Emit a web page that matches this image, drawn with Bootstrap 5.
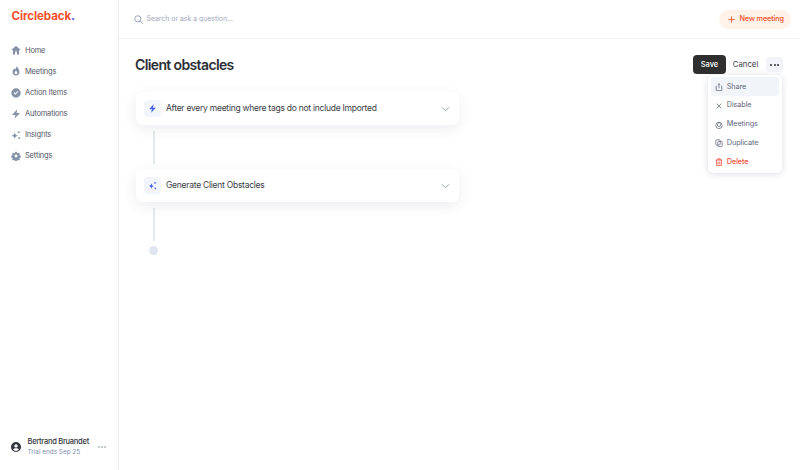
<!DOCTYPE html>
<html lang="en">
<head>
<meta charset="utf-8">
<title>Client obstacles</title>
<link href="https://cdn.jsdelivr.net/npm/bootstrap@5.3.0/dist/css/bootstrap.min.css" rel="stylesheet">
<style>
html,body{height:470px;overflow:hidden;background:#fff}
body{font-family:Inter,"Liberation Sans",sans-serif;color:#33363f;font-size:7.6px}
.shell{height:470px}
.side{width:119px;flex:none;border-right:1px solid #eef0f3;background:#fff;box-shadow:inset -10px 0 12px -12px rgba(40,50,80,.03)}
.brand{font-size:11.6px;font-weight:700;color:#f4502a;padding:8.500px 0 0 11.500px;height:39.800px;line-height:14px;letter-spacing:-.01em}
.brand i{font-style:normal;font-weight:800;color:#4a63ee}
.navi{display:flex;align-items:center;gap:4px;height:21.100px;padding-left:11px;color:#525766;font-size:7.500px;font-weight:400;letter-spacing:-.025em}
.navi svg{width:10px;height:10px;fill:#8593a9;flex:none}
.who{padding:0 0 13px 11px;gap:6.500px;white-space:nowrap}
.who b{font-size:7.500px;font-weight:500;color:#30333b;display:block;line-height:10px;letter-spacing:-.035em}
.who small{font-size:6.400px;color:#7d8fae;display:block;line-height:10px;font-weight:400}
.more{margin-left:3px}
.top{height:39px;border-bottom:1px solid #eef0f3;padding:0 9px 0 15px}
.q{color:#a0aabd;font-size:6.900px;margin-left:3.500px}
.newm{background:#fff2e9;color:#f4502a;border:0;border-radius:13px;height:19px;width:72px;padding:0 0 0 9px;font-size:7.300px;font-weight:500;display:flex;align-items:center;gap:4.500px;letter-spacing:-.02em}
.work{padding:0 17px}
.hd{height:51px}
.ttl{font-size:14px;font-weight:600;color:#2c2e35;margin:0;line-height:1;padding-top:.5px;letter-spacing:-.045em;margin-left:-1px}
.sv{background:#2f2f2f;color:#fff;border:0;border-radius:4px;width:33px;height:19px;font-size:7.500px;font-weight:500;padding:1px 0 0;margin-right:-1px}
.cn{background:none;border:0;color:#3d4048;font-size:7.800px;font-weight:400;padding:1px 0 0;width:41px;height:19px}
.dt{background:#f2f4f9;border:0;border-radius:4px;width:17px;height:15px;padding:0;display:flex;align-items:center;justify-content:center;gap:1.300px}
.dt span{width:2px;height:2px;border-radius:50%;background:#2f3138}
.flow{width:323px;padding-top:2px}
.stepc{height:33px;border-radius:6px;border:0;box-shadow:0 4px 14px rgba(50,60,90,.09);padding:0 9px 0 8px;font-size:8.500px;font-weight:400;color:#3a3d46;gap:5px;flex-direction:row;align-items:center;letter-spacing:-.03em}
.ic{width:17px;height:17px;border-radius:4px;background:#f3f5fc;display:flex;align-items:center;justify-content:center;flex:none}
.ic svg{width:9px;height:9px;fill:#4a63ee}
.chev{width:9px;height:6px;fill:none;stroke:#8d99ad;stroke-width:1;margin-left:auto}
.link{width:2px;height:33px;background:#e3e8f1;margin:6px 0 5px 16.500px}
.end{width:9px;height:9px;border-radius:50%;background:#e0e6f0;margin-left:13px}
.menuw{position:absolute;right:18px;top:75px;width:74px;height:98px;border-radius:5px;box-shadow:0 1px 7px rgba(40,50,80,.16);background:#fff;padding:2px 3px}
.mi{display:flex;align-items:center;gap:3.800px;height:18.800px;padding:1px 0 0 4px;font-size:7.300px;font-weight:400;color:#62687a;border-radius:3px;letter-spacing:-.015em}
.mi.on{background:#f1f4f8;height:19px}
.mi svg{width:8px;height:8px;fill:none;stroke:#6a7080;stroke-width:1;flex:none}
.mi.del{color:#ee4f38;font-weight:500}
.mi.del svg{stroke:#ee4f38}
</style>
</head>
<body>
<div class="d-flex shell">
  <aside class="side d-flex flex-column">
    <div class="brand">Circleback<i>.</i></div>
    <div class="navi"><svg viewBox="0 0 16 16"><path d="M8 1 .5 8H3v7h3.500v-4.500h3V15H13V8h2.500z"/></svg><span>Home</span></div>
    <div class="navi"><svg viewBox="0 0 16 16"><path d="M8.500.5c.6 2.600-1 3.600-2 5C6 4.800 5.600 4.300 5.200 4 3.400 5.600 2.500 7.500 2.500 9.500A5.500 5.500 0 0 0 8 15a5.500 5.500 0 0 0 5.500-5.500C13.500 6 11 2.500 8.500.5zM8 13a2.300 2.300 0 0 1-2.300-2.300C5.700 9.300 7 8.500 8 7c1 1.500 2.300 2.300 2.300 3.700A2.300 2.300 0 0 1 8 13z"/></svg><span>Meetings</span></div>
    <div class="navi"><svg viewBox="0 0 16 16"><path fill-rule="evenodd" d="M8 .5a7.500 7.500 0 1 0 0 15 7.500 7.500 0 0 0 0-15zm3.800 5.200L7 10.800 4.200 8l1.100-1.100L7 8.500l3.700-3.900z"/></svg><span>Action Items</span></div>
    <div class="navi"><svg viewBox="0 0 16 16"><path d="M10 .5 1.500 9.500H7L5.500 15.500 14.500 6.500H9z"/></svg><span>Automations</span></div>
    <div class="navi"><svg viewBox="0 0 16 16"><path d="M6 4c.6 3 1.800 4.300 5 5-3.200.7-4.400 2-5 5-.6-3-1.800-4.300-5-5 3.200-.7 4.400-2 5-5zM12.500 1c.3 1.500 1 2.200 2.500 2.500-1.500.3-2.200 1-2.500 2.500-.3-1.500-1-2.200-2.500-2.500 1.500-.3 2.200-1 2.500-2.500z"/><circle cx="13" cy="13" r="1.500"/></svg><span>Insights</span></div>
    <div class="navi"><svg viewBox="0 0 16 16"><path fill-rule="evenodd" d="M6.500.5h3l.4 2 1.300.6 1.800-1.100 2.100 2.100-1.100 1.800.6 1.300 2 .4v3l-2 .4-.6 1.300 1.100 1.800-2.100 2.100-1.800-1.100-1.300.6-.4 2h-3l-.4-2-1.300-.6-1.800 1.100-2.100-2.100 1.100-1.800-.6-1.300-2-.4v-3l2-.4.6-1.300L.8 4.100l2.100-2.100 1.800 1.100 1.300-.6zM8 5.500a2.500 2.500 0 1 0 0 5 2.500 2.500 0 0 0 0-5z" transform="translate(.8 .8) scale(.9)"/></svg><span>Settings</span></div>
    <div class="who d-flex align-items-center mt-auto">
      <svg width="10" height="10" viewBox="0 0 16 16"><path fill="#33363f" fill-rule="evenodd" d="M8 0a8 8 0 1 0 0 16A8 8 0 0 0 8 0zm0 3.500a2.700 2.700 0 1 1 0 5.400 2.700 2.700 0 0 1 0-5.400zM3.300 12c.8-1.400 2.600-2 4.700-2s3.900.6 4.700 2A6 6 0 0 1 8 14.200 6 6 0 0 1 3.300 12z"/></svg>
      <div><b>Bertrand Bruandet</b><small>Trial ends Sep 25</small></div>
      <svg class="more" width="8" height="2" viewBox="0 0 8 2"><circle cx="1" cy="1" r=".8" fill="#7b879c"/><circle cx="4" cy="1" r=".8" fill="#7b879c"/><circle cx="7" cy="1" r=".8" fill="#7b879c"/></svg>
    </div>
  </aside>
  <main class="flex-grow-1 position-relative">
    <header class="top d-flex align-items-center">
      <svg width="9" height="9" viewBox="0 0 16 16" fill="none" stroke="#8f9db5" stroke-width="1.600"><circle cx="6.800" cy="6.800" r="5.500"/><path d="m11 11 4.500 4.500"/></svg>
      <span class="q">Search or ask a question...</span>
      <button class="newm ms-auto" type="button"><svg width="7" height="7" viewBox="0 0 8 8" stroke="#f4502a" stroke-width="1"><path d="M4 .5v7M.5 4h7"/></svg><span>New meeting</span></button>
    </header>
    <div class="work">
      <div class="hd d-flex align-items-center">
        <h1 class="ttl">Client obstacles</h1>
        <button class="sv ms-auto" type="button">Save</button>
        <button class="cn" type="button">Cancel</button>
        <button class="dt" type="button" aria-label="More"><span></span><span></span><span></span></button>
      </div>
      <div class="flow">
        <div class="card stepc">
          <div class="ic"><svg viewBox="0 0 16 16"><path d="M10 .5 2 9.500H7L5.500 15.500 14 6.500H9z"/></svg></div>
          <span>After every meeting where tags do not include Imported</span>
          <svg class="chev" viewBox="0 0 10 6"><path d="m1 1 4 4 4-4"/></svg>
        </div>
        <div class="link"></div>
        <div class="card stepc">
          <div class="ic"><svg viewBox="0 0 16 16"><path d="M6 4c.6 3 1.800 4.300 5 5-3.200.7-4.400 2-5 5-.6-3-1.800-4.300-5-5 3.200-.7 4.400-2 5-5zM12.500 1c.3 1.500 1 2.200 2.500 2.500-1.500.3-2.200 1-2.500 2.500-.3-1.500-1-2.200-2.500-2.500 1.500-.3 2.200-1 2.500-2.500z"/><circle cx="13" cy="13" r="1.500"/></svg></div>
          <span>Generate Client Obstacles</span>
          <svg class="chev" viewBox="0 0 10 6"><path d="m1 1 4 4 4-4"/></svg>
        </div>
        <div class="link"></div>
        <div class="end"></div>
      </div>
    </div>
    <div class="menuw">
      <div class="mi on"><svg viewBox="0 0 10 10"><path d="M2.500 4H1.500v5.500h7V4h-1M5 6.500V.8M3.500 2.200 5 .8l1.500 1.400"/></svg>Share</div>
      <div class="mi"><svg viewBox="0 0 10 10"><path d="m2 2 6 6M8 2 2 8"/></svg>Disable</div>
      <div class="mi"><svg viewBox="0 0 10 10"><circle cx="5" cy="5.500" r="4"/><path d="M5 1.500c1 1.500 2 2 2 3.500a2 2 0 0 1-4 0C3 3.500 4 3 5 1.500z"/></svg>Meetings</div>
      <div class="mi"><svg viewBox="0 0 10 10"><rect x="1" y="1" width="5.500" height="6.500" rx="1"/><rect x="3.500" y="3" width="5.500" height="6.500" rx="1"/></svg>Duplicate</div>
      <div class="mi del"><svg viewBox="0 0 10 10"><path d="M1 2.500h8M3.500 2.500V1h3v1.500M2 2.500V9.500h6v-7M4 4.500v3.500M6 4.500v3.500"/></svg>Delete</div>
    </div>
  </main>
</div>
<script src="https://cdn.jsdelivr.net/npm/bootstrap@5.3.0/dist/js/bootstrap.bundle.min.js"></script>
</body>
</html>
